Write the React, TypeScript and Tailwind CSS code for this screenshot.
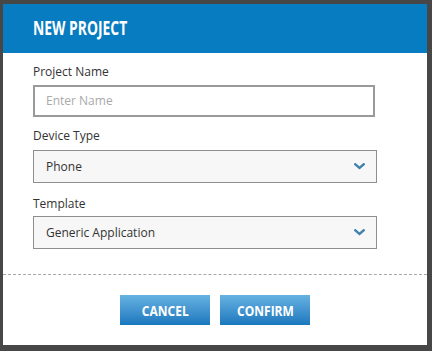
import React from "react";

const Chevron = () => (
  <svg width="11" height="7" viewBox="0 0 11 7" className="shrink-0">
    <path d="M1.3 1.3 L5.5 5 L9.7 1.3" fill="none" stroke="#3f82ab" strokeWidth="2.4" strokeLinecap="square" />
  </svg>
);

const SelectBox = ({ value }: { value: string }) => (
  <div className="flex h-[33px] w-[344px] items-center justify-between border border-[#8e8e8e] bg-[#f7f7f7] pl-[12px] pr-[11px] text-[12px] text-[#333]">
    <span>{value}</span>
    <Chevron />
  </div>
);

const App = () => {
  const condensed = { fontFamily: '"Open Sans", "Liberation Sans", sans-serif' };
  return (
    <div className="h-[351px] w-[432px] overflow-hidden bg-[#474747] pl-[3px] pt-[4px]">
      <div className="flex h-[341px] w-[424px] flex-col bg-white font-['Open_Sans',sans-serif]">
        {/* Header */}
        <div className="flex h-[49px] items-center bg-[#087cc0] pl-[30px]">
          <h1
            className="inline-block origin-left scale-x-[0.73] text-[19px] font-bold text-white"
            style={condensed}
          >
            NEW PROJECT
          </h1>
        </div>

        {/* Form */}
        <div className="flex flex-col pl-[30px] pt-[10px]">
          <label className="text-[12px] leading-[18px] text-[#333]">Project Name</label>
          <div className="mt-[4px] flex h-[32px] w-[342px] items-center border-2 border-[#9a9a9a] pl-[11px] text-[12px] text-[#aaa]">
            Enter Name
          </div>

          <label className="mt-[10px] text-[12px] leading-[18px] text-[#333]">Device Type</label>
          <div className="mt-[5px]">
            <SelectBox value="Phone" />
          </div>

          <label className="mt-[12px] text-[12px] leading-[18px] text-[#333]">Template</label>
          <div className="mt-[3px]">
            <SelectBox value="Generic Application" />
          </div>
        </div>

        <div className="mt-[25px] border-t border-dashed border-[#a8a8a8]" />

        {/* Actions */}
        <div className="flex justify-center gap-[10px] pt-[20px]">
          <button className="flex h-[30px] w-[90px] items-center justify-center bg-gradient-to-b from-[#66b2e2] to-[#1878bd] text-white">
            <span className="inline-block scale-x-[0.8] text-[15px] font-bold" style={condensed}>
              CANCEL
            </span>
          </button>
          <button className="flex h-[30px] w-[90px] items-center justify-center bg-gradient-to-b from-[#66b2e2] to-[#1878bd] text-white">
            <span className="inline-block scale-x-[0.8] text-[15px] font-bold" style={condensed}>
              CONFIRM
            </span>
          </button>
        </div>
      </div>
    </div>
  );
};

export default App;
